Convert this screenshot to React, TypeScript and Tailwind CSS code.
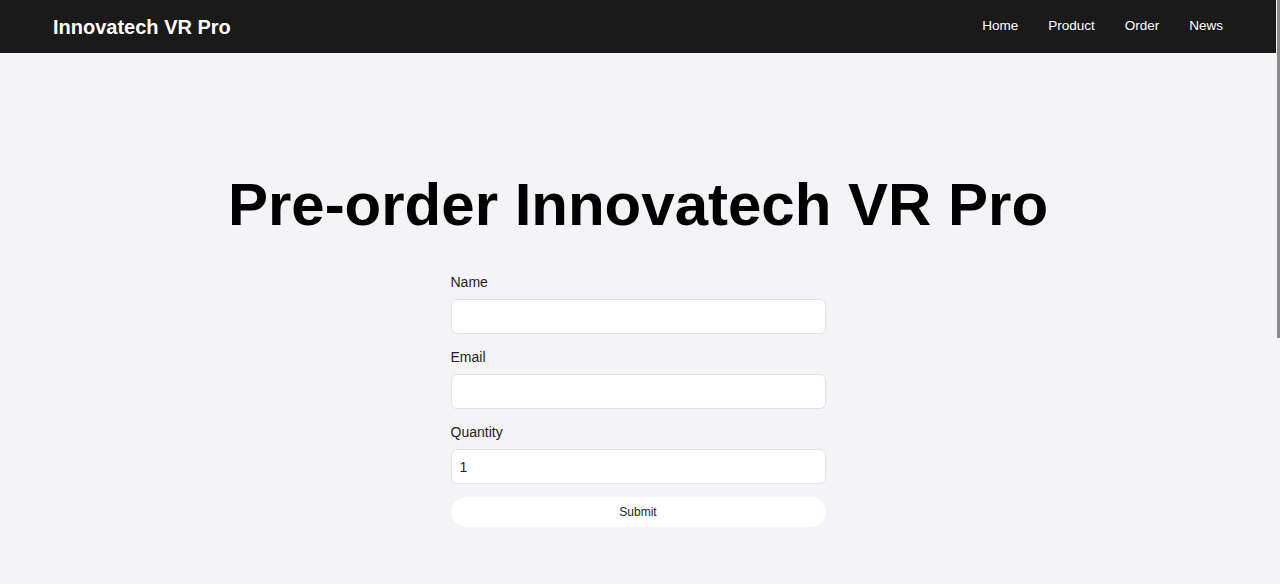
export default function App() {
  return (
    <div className="relative min-h-[584px] pr-[4px] bg-[#f4f4f6] font-['Liberation_Sans',Arial,sans-serif] text-[#111]">
      <header className="h-[53px] bg-[#1a1a1a] flex items-center justify-between pl-[53px] pr-[53px]">
        <span className="text-white text-[20px] font-bold">Innovatech VR Pro</span>
        <nav className="flex items-center gap-[30px] text-white text-[13.5px]">
          <a href="#">Home</a>
          <a href="#">Product</a>
          <a href="#">Order</a>
          <a href="#">News</a>
        </nav>
      </header>

      <main className="flex flex-col items-center pt-[122px] pb-[40px]">
        <h1 className="text-6xl font-bold leading-none text-black">Pre-order Innovatech VR Pro</h1>
        <form className="w-[375px] mt-[37px] flex flex-col" onSubmit={(e) => e.preventDefault()}>
          <label className="text-[14px] text-[#222] mb-[6px]">Name</label>
          <input className="h-[35px] rounded-[6px] border border-[#e2e2e2] bg-white px-2 text-[14px] mb-[13px]" />
          <label className="text-[14px] text-[#222] mb-[6px]">Email</label>
          <input type="email" className="h-[35px] rounded-[6px] border border-[#e2e2e2] bg-white px-2 text-[14px] mb-[13px]" />
          <label className="text-[14px] text-[#222] mb-[6px]">Quantity</label>
          <input defaultValue="1" className="h-[35px] rounded-[6px] border border-[#e2e2e2] bg-white px-2 text-[14px] text-[#222] mb-[13px]" />
          <button type="submit" className="h-[30px] rounded-full bg-white text-[12px] text-[#222]">Submit</button>
        </form>
      </main>

      {/* scrollbar thumb */}
      <div className="fixed top-0 right-0 w-[3px] h-[338px] bg-[#8a8a8a]" />
    </div>
  );
}
